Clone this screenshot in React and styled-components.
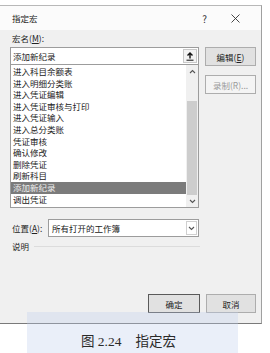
import React from "react";
import styled, { createGlobalStyle } from "styled-components";

const GlobalStyle = createGlobalStyle`
  body {
    margin: 0;
    background: #ffffff;
    font-family: "Noto Sans CJK SC", "Noto Sans", sans-serif;
  }
`;

const Page = styled.div`
  width: 270px;
  height: 353px;
  padding-top: 5px;
  box-sizing: border-box;
  overflow: hidden;
`;

const Dialog = styled.div`
  width: 262px;
  height: 319px;
  box-sizing: border-box;
  border-top: 1px solid #b8b8b8;
  border-right: 1px solid #a0a0a0;
  border-bottom: 1px solid #7a7a7a;
  background: #f0f0f0;
  display: flex;
  flex-direction: column;
`;

const TitleBar = styled.div`
  height: 24px;
  display: flex;
  align-items: center;
  padding: 0 10px 0 12px;
  background: #fbfbfb;
  font-size: 8.5px;
  color: #222;
`;

const TitleText = styled.span`
  flex: 1;
`;

const TitleButton = styled.span`
  width: 31px;
  display: flex;
  justify-content: center;
  align-items: center;
  font-size: 10px;
  color: #333;
`;

const Body = styled.div`
  flex: 1;
  display: flex;
  flex-direction: column;
  padding: 0 5px 10px 10px;
`;

const Top = styled.div`
  display: flex;
  gap: 6px;
`;

const Left = styled.div`
  width: 189px;
  display: flex;
  flex-direction: column;
`;

const Right = styled.div`
  width: 51px;
  padding-top: 17px;
  display: flex;
  flex-direction: column;
  gap: 9px;
`;

const Label = styled.div`
  height: 14px;
  line-height: 14px;
  margin: 1px 0 2px 2px;
  font-size: 8.5px;
  color: #222;
`;

const Input = styled.div`
  height: 18px;
  box-sizing: border-box;
  border: 1px solid #9c9c9c;
  background: #fff;
  display: flex;
  align-items: center;
  padding: 0 1px 0 2px;
  font-size: 8.5px;
  color: #222;
`;

const InputText = styled.span`
  flex: 1;
`;

const CollapseButton = styled.span`
  width: 14px;
  height: 14px;
  box-sizing: border-box;
  border: 1px solid #c8c8c8;
  background: #f3f3f3;
  display: flex;
  align-items: center;
  justify-content: center;
`;

const List = styled.div`
  height: 144px;
  margin-top: -1px;
  box-sizing: border-box;
  border: 1px solid #9c9c9c;
  background: #fff;
  display: flex;
`;

const Items = styled.div`
  flex: 1;
  padding-top: 1px;
`;

const Item = styled.div`
  height: 11.6px;
  line-height: 11.6px;
  padding-left: 2px;
  font-size: 8.5px;
  color: ${(p) => (p.$selected ? "#eeeeee" : "#222")};
  background: ${(p) => (p.$selected ? "#7b7b7b" : "transparent")};
  white-space: nowrap;
`;

const ScrollBar = styled.div`
  width: 12px;
  background: #f0f0f0;
  display: flex;
  flex-direction: column;
  align-items: center;
`;

const ScrollArrow = styled.div`
  height: 12px;
  width: 12px;
  display: flex;
  align-items: center;
  justify-content: center;
`;

const Track = styled.div`
  flex: 1;
  width: 12px;
  display: flex;
  flex-direction: column;
  justify-content: flex-end;
  padding: 0 1px;
  box-sizing: border-box;
`;

const Thumb = styled.div`
  height: 94px;
  background: #cdcdcd;
`;

const Button = styled.div`
  width: ${(p) => p.$w || 51}px;
  height: 19px;
  box-sizing: border-box;
  border: 1px solid ${(p) => (p.$default ? "#5a5a5a" : "#adadad")};
  background: ${(p) => (p.$disabled ? "#f4f4f4" : "#e1e1e1")};
  display: flex;
  align-items: center;
  justify-content: center;
  font-size: 8.5px;
  color: ${(p) => (p.$disabled ? "#9a9a9a" : "#222")};
`;

const Row = styled.div`
  display: flex;
  align-items: center;
  width: 189px;
  margin-top: 11px;
`;

const RowLabel = styled.span`
  width: 36px;
  padding-left: 2px;
  font-size: 8.5px;
  color: #222;
`;

const Select = styled.div`
  flex: 1;
  height: 18px;
  box-sizing: border-box;
  border: 1px solid #9c9c9c;
  background: #fff;
  display: flex;
  align-items: center;
  padding: 0 1px 0 3px;
  font-size: 8.5px;
  color: #222;
`;

const SelectArrow = styled.span`
  width: 11px;
  height: 14px;
  box-sizing: border-box;
  border: 1px solid #d0d0d0;
  display: flex;
  align-items: center;
  justify-content: center;
`;

const Group = styled.div`
  display: flex;
  align-items: center;
  gap: 5px;
  width: 188px;
  margin-top: 2px;
  padding-left: 2px;
  font-size: 8.5px;
  color: #222;
  line-height: 14px;
`;

const GroupLine = styled.span`
  flex: 1;
  height: 1px;
  background: #dcdcdc;
`;

const Footer = styled.div`
  margin-top: auto;
  display: flex;
  gap: 6px;
  padding-left: 138px;
`;

const Caption = styled.div`
  position: relative;
  margin: -12px 0 0 27px;
  width: 211px;
  height: 41px;
  background: rgba(190, 205, 235, 0.32);
  display: flex;
  align-items: flex-end;
  justify-content: center;
  padding: 0 8px 3px 0;
  box-sizing: border-box;
  font-family: "Liberation Serif", "Noto Sans CJK SC", serif;
  font-size: 13.5px;
  color: #2a2a2a;
`;

const Gap = styled.span`
  display: inline-block;
  width: 14px;
`;

const U = styled.span`
  text-decoration: underline;
`;

const macros = [
  "进入科目余额表",
  "进入明细分类账",
  "进入凭证编辑",
  "进入凭证审核与打印",
  "进入凭证输入",
  "进入总分类账",
  "凭证审核",
  "确认修改",
  "删除凭证",
  "刷新科目",
  "添加新纪录",
  "调出凭证",
];

const Chevron = ({ up }) => (
  <svg width="7" height="5" viewBox="0 0 7 5">
    <path
      d={up ? "M1 4 L3.5 1.5 L6 4" : "M1 1 L3.5 3.5 L6 1"}
      fill="none"
      stroke="#555"
      strokeWidth="1.1"
    />
  </svg>
);

const App = () => (
  <>
    <GlobalStyle />
    <Page>
      <Dialog>
        <TitleBar>
          <TitleText>指定宏</TitleText>
          <TitleButton>?</TitleButton>
          <TitleButton>
            <svg width="9" height="9" viewBox="0 0 9 9">
              <path d="M0.5 0.5 L8.5 8.5 M8.5 0.5 L0.5 8.5" stroke="#333" strokeWidth="0.9" />
            </svg>
          </TitleButton>
        </TitleBar>
        <Body>
          <Top>
            <Left>
              <Label>
                宏名(<U>M</U>):
              </Label>
              <Input>
                <InputText>添加新纪录</InputText>
                <CollapseButton>
                  <svg width="8" height="9" viewBox="0 0 8 9">
                    <path d="M4 1 L4 6.5 M1.5 3.5 L4 1 L6.5 3.5" fill="none" stroke="#111" strokeWidth="1.4" />
                    <path d="M0.5 8.2 L7.5 8.2" stroke="#111" strokeWidth="1" />
                  </svg>
                </CollapseButton>
              </Input>
              <List>
                <Items>
                  {macros.map((m) => (
                    <Item key={m} $selected={m === "添加新纪录"}>
                      {m}
                    </Item>
                  ))}
                </Items>
                <ScrollBar>
                  <ScrollArrow>
                    <Chevron up />
                  </ScrollArrow>
                  <Track>
                    <Thumb />
                  </Track>
                  <ScrollArrow>
                    <Chevron />
                  </ScrollArrow>
                </ScrollBar>
              </List>
            </Left>
            <Right>
              <Button>
                编辑(<U>E</U>)
              </Button>
              <Button $disabled>录制(R)...</Button>
            </Right>
          </Top>
          <Row>
            <RowLabel>
              位置(<U>A</U>):
            </RowLabel>
            <Select>
              <InputText>所有打开的工作簿</InputText>
              <SelectArrow>
                <Chevron />
              </SelectArrow>
            </Select>
          </Row>
          <Group>
            说明
            <GroupLine />
          </Group>
          <Footer>
            <Button $w={52} $default>
              确定
            </Button>
            <Button $w={50}>取消</Button>
          </Footer>
        </Body>
      </Dialog>
      <Caption>
        图 2.24<Gap />指定宏
      </Caption>
    </Page>
  </>
);

export default App;
